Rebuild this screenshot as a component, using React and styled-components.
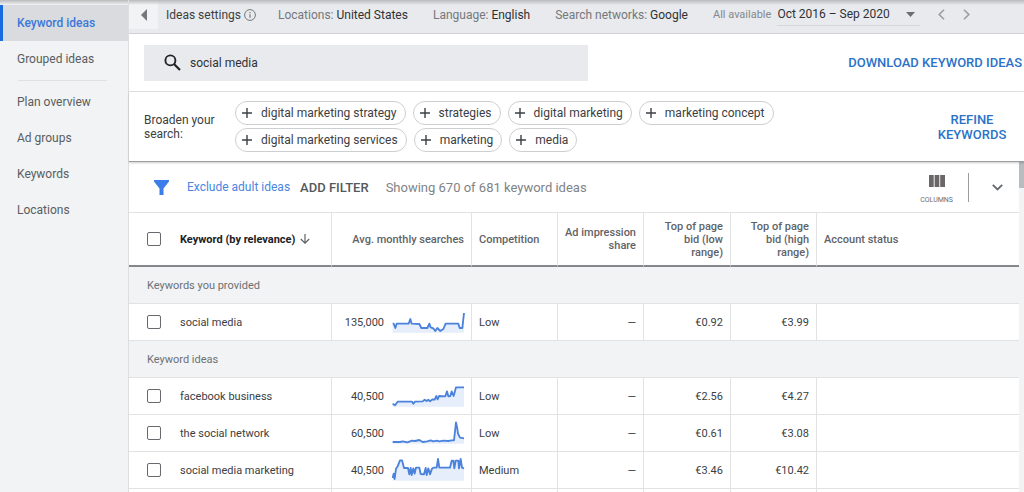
import React, { useState } from 'react'
import styled, { createGlobalStyle } from 'styled-components'

const navItems = ['Keyword ideas', 'Grouped ideas', 'Plan overview', 'Ad groups', 'Keywords', 'Locations']

const broaden = [
  'digital marketing strategy',
  'strategies',
  'digital marketing',
  'marketing concept',
  'digital marketing services',
  'marketing',
  'media'
]

const provided = [
  {
    keyword: 'social media',
    searches: '135,000',
    competition: 'Low',
    low: '€0.92',
    high: '€3.99',
    trend: '2,38 5,38 10,51 14,38 50,38 55,24 59,38 82,39 88,51 106,51 112,38 116,49 124,52 130,60 136,51 145,60 154,54 161,38 199,38 203,51 211,51 216,6'
  }
]

const ideas = [
  {
    keyword: 'facebook business',
    searches: '40,500',
    competition: 'Low',
    low: '€2.56',
    high: '€4.27',
    trend: '2,56 9,61 17,50 60,50 64,56 69,50 92,49 98,44 104,48 109,44 114,49 122,43 128,44 133,33 137,43 141,33 160,34 165,19 169,34 175,33 179,19 185,33 192,7 216,7'
  },
  {
    keyword: 'the social network',
    searches: '60,500',
    competition: 'Low',
    low: '€0.61',
    high: '€3.08',
    trend: '2,60 24,60 32,58 46,61 60,56 69,57 82,54 92,60 106,58 116,55 124,58 134,56 142,58 154,56 169,57 179,55 186,55 192,1 196,20 198,35 204,47 216,49'
  },
  {
    keyword: 'social media marketing',
    searches: '40,500',
    competition: 'Medium',
    low: '€3.46',
    high: '€10.42',
    trend: '2,57 5,44 8,60 12,29 17,22 24,4 30,4 36,27 48,27 52,46 56,27 59,48 64,28 68,44 72,26 82,26 86,45 96,46 101,27 104,48 109,28 114,46 120,29 124,26 134,26 138,0 142,26 174,26 179,5 184,5 187,28 191,5 199,5 201,28 206,0 210,26 216,28'
  }
]

const Sparkline = ({ points }) => (
  <Spark viewBox='-3 0 219 66' aria-hidden='true'>
    <polygon points={`2,65 ${points} 216,65`} fill='#e6eefb' />
    <polyline points={points} fill='none' stroke='#4a82dc' strokeWidth='5.5' strokeLinejoin='round' />
  </Spark>
)

const KeywordRow = ({ row }) => (
  <tr>
    <Cell>
      <KeywordLabel>
        <Checkbox type='checkbox' />
        {row.keyword}
      </KeywordLabel>
    </Cell>
    <Cell>
      <Searches>
        {row.searches}
        <Sparkline points={row.trend} />
      </Searches>
    </Cell>
    <Cell>{row.competition}</Cell>
    <Cell $right>—</Cell>
    <Cell $right>{row.low}</Cell>
    <Cell $right>{row.high}</Cell>
    <Cell />
  </tr>
)

const App = () => {
  const [query, setQuery] = useState('social media')
  const [active, setActive] = useState('Keyword ideas')

  return (
    <Page>
      <GlobalStyle />
      <Sidebar>
        {navItems.map(item => (
          <React.Fragment key={item}>
            <NavLink href='#' $active={item === active} onClick={() => setActive(item)}>
              {item}
            </NavLink>
            {item === 'Grouped ideas' && <NavDivider />}
          </React.Fragment>
        ))}
      </Sidebar>

      <Main>
        <SettingsBar>
          <CollapseButton aria-label='Collapse'>
            <svg width='6' height='12' viewBox='0 0 6 12'>
              <path d='M6 0v12L0 6z' fill='#75787c' />
            </svg>
          </CollapseButton>
          <SettingsTitle>
            Ideas settings
            <svg width='12' height='12' viewBox='0 0 12 12' fill='none' stroke='#75787c'>
              <circle cx='6' cy='6' r='5.4' />
              <path d='M6 5.2v3.6M6 3v1.2' strokeWidth='1.2' />
            </svg>
          </SettingsTitle>
          <Settings>
            <Setting>Locations: <b>United States</b></Setting>
            <Setting>Language: <b>English</b></Setting>
            <Setting>Search networks: <b>Google</b></Setting>
            <DateRange>
              <label htmlFor='range'>All available</label>
              <SelectWrap>
                <DateSelect id='range'>
                  <option>Oct 2016 – Sep 2020</option>
                </DateSelect>
                <svg width='9' height='5' viewBox='0 0 9 5'>
                  <path d='M0 0h9L4.500 5z' fill='#6a6d71' />
                </svg>
              </SelectWrap>
            </DateRange>
          </Settings>
          <Pager>
            <IconButton aria-label='Previous period'>
              <svg width='7' height='11' viewBox='0 0 7 11' fill='none' stroke='#9a9da1' strokeWidth='1.6'>
                <path d='M6 .7L1.200 5.500 6 10.300' />
              </svg>
            </IconButton>
            <IconButton aria-label='Next period'>
              <svg width='7' height='11' viewBox='0 0 7 11' fill='none' stroke='#9a9da1' strokeWidth='1.6'>
                <path d='M1 .7l4.800 4.800L1 10.300' />
              </svg>
            </IconButton>
          </Pager>
        </SettingsBar>

        <SearchSection>
          <SearchBox>
            <svg width='17' height='17' viewBox='0 0 17 17' fill='none' stroke='#222326' strokeWidth='1.9'>
              <circle cx='6.4' cy='6.4' r='5' />
              <path d='M10 10l6 6' strokeWidth='2.200' />
            </svg>
            <SearchInput aria-label='Search keywords' value={query} onChange={e => setQuery(e.target.value)} />
          </SearchBox>
          <TextButton>DOWNLOAD KEYWORD IDEAS</TextButton>
        </SearchSection>

        <BroadenSection>
          <BroadenLabel>Broaden your search:</BroadenLabel>
          <Chips>
            {broaden.map(term => (
              <Chip key={term}>
                <svg width='10' height='10' viewBox='0 0 10 10' stroke='#3c4043' strokeWidth='1.4'>
                  <path d='M5 0v10M0 5h10' />
                </svg>
                {term}
              </Chip>
            ))}
          </Chips>
          <RefineButton>REFINE KEYWORDS</RefineButton>
        </BroadenSection>

        <Results>
          <ResultsBody>
            <FilterBar>
              <svg width='15' height='15' viewBox='0 0 15 15'>
                <path d='M0 0h15v1.500L9.500 8.500V15h-4V8.500L0 1.500z' fill='#3b7de9' />
              </svg>
              <FilterLink href='#'>Exclude adult ideas</FilterLink>
              <AddFilter>ADD FILTER</AddFilter>
              <Count>Showing 670 of 681 keyword ideas</Count>
              <ColumnsButton>
                <svg width='16' height='12' viewBox='0 0 16 12' fill='#6b6769'>
                  <path d='M0 0h4.700v12H0zM5.600 0h4.700v12H5.600zM11.200 0H16v12h-4.800z' />
                </svg>
                COLUMNS
              </ColumnsButton>
              <ExpandButton aria-label='Expand'>
                <svg width='11' height='7' viewBox='0 0 11 7' fill='none' stroke='#66696d' strokeWidth='1.8'>
                  <path d='M.8.8l4.700 4.700L10.200.8' />
                </svg>
              </ExpandButton>
            </FilterBar>
            <Table>
              <colgroup>
                <Col $width={203} />
                <Col $width={140} />
                <Col $width={86} />
                <Col $width={86} />
                <Col $width={87} />
                <Col $width={86} />
                <col />
              </colgroup>
              <thead>
                <tr>
                  <HeadCell>
                    <KeywordLabel $strong>
                      <Checkbox type='checkbox' />
                      Keyword (by relevance)
                      <svg width='10' height='10' viewBox='0 0 10 10' fill='none' stroke='#5f6368' strokeWidth='1.2'>
                        <path d='M5 0v9M.8 5L5 9.200 9.200 5' />
                      </svg>
                    </KeywordLabel>
                  </HeadCell>
                  <HeadCell $right>Avg. monthly searches</HeadCell>
                  <HeadCell>Competition</HeadCell>
                  <HeadCell $right>Ad impression share</HeadCell>
                  <HeadCell $right>Top of page bid (low range)</HeadCell>
                  <HeadCell $right>Top of page bid (high range)</HeadCell>
                  <HeadCell>Account status</HeadCell>
                </tr>
              </thead>
              <tbody>
                <tr><GroupCell colSpan={7}>Keywords you provided</GroupCell></tr>
                {provided.map(row => <KeywordRow key={row.keyword} row={row} />)}
                <tr><GroupCell colSpan={7}>Keyword ideas</GroupCell></tr>
                {ideas.map(row => <KeywordRow key={row.keyword} row={row} />)}
                <tr>
                  <Cell /><Cell /><Cell /><Cell /><Cell /><Cell /><Cell />
                </tr>
              </tbody>
            </Table>
          </ResultsBody>
          <ScrollTrack><ScrollThumb /></ScrollTrack>
        </Results>
      </Main>
    </Page>
  )
}

export default App

const GlobalStyle = createGlobalStyle`
  * {
    box-sizing: border-box;
  }
  body {
    margin: 0;
    font-family: Roboto, sans-serif;
    font-size: 12px;
    color: #3c4043;
  }
  button, input, select {
    font: inherit;
    color: inherit;
    margin: 0;
    padding: 0;
    border: 0;
    background: none;
  }
  button {
    cursor: pointer;
  }
  a {
    text-decoration: none;
  }
  svg {
    display: block;
    flex: none;
  }
`

const Page = styled.div`
  display: flex;
  height: 100vh;
  overflow: hidden;
  background: #f1f3f4;
`

const Sidebar = styled.nav`
  flex: none;
  width: 129px;
  padding-top: 5px;
  border-right: 1px solid #dcdee0;
  background: linear-gradient(#b9babc, #f1f3f4 5px);
`

const NavLink = styled.a`
  display: flex;
  align-items: center;
  height: 36px;
  padding-left: ${props => props.$active ? 14 : 17}px;
  border-left: ${props => props.$active ? '3px solid #1a6be0' : 'none'};
  background: ${props => props.$active ? '#dadbde' : 'transparent'};
  color: ${props => props.$active ? '#3b78dc' : '#5a5d61'};
  font-weight: ${props => props.$active ? 500 : 400};
`

const NavDivider = styled.hr`
  margin: 3px 21px 3px 18px;
  border: 0;
  border-top: 1px solid #dfe1e3;
`

const Main = styled.main`
  flex: 1;
  min-width: 0;
  display: flex;
  flex-direction: column;
`

const SettingsBar = styled.div`
  flex: none;
  display: flex;
  align-items: center;
  height: 34px;
  padding-bottom: 4px;
  border-bottom: 1px solid #cfd1d3;
  background: linear-gradient(#b9babc, #e8eaed 5px);
  white-space: nowrap;
`

const CollapseButton = styled.button`
  align-self: stretch;
  display: flex;
  align-items: center;
  justify-content: center;
  width: 29px;
  background: linear-gradient(#b9babc, #f1f3f4 5px);
`

const SettingsTitle = styled.div`
  display: flex;
  align-items: center;
  gap: 3px;
  margin: 0 22px 0 8px;
`

const Settings = styled.div`
  display: flex;
  align-items: center;
  gap: 25px;
`

const Setting = styled.span`
  color: #75787c;
  b {
    font-weight: 400;
    color: #2f3235;
  }
`

const DateRange = styled.div`
  display: flex;
  align-items: center;
  gap: 6px;
  color: #85888c;
  label {
    font-size: 11px;
  }
`

const SelectWrap = styled.div`
  display: flex;
  align-items: center;
  width: 143px;
  height: 22px;
  padding-right: 5px;
  border-bottom: 1px solid #d5d7da;
`

const DateSelect = styled.select`
  flex: 1;
  appearance: none;
  color: #2f3235;
`

const Pager = styled.div`
  display: flex;
  gap: 18px;
  margin-left: 18px;
`

const IconButton = styled.button`
  display: flex;
`

const SearchSection = styled.div`
  flex: none;
  display: flex;
  align-items: center;
  justify-content: space-between;
  height: 58px;
  padding: 0 2px 0 15px;
  border-bottom: 1px solid #dfe1e3;
  background: #fff;
`

const SearchBox = styled.div`
  display: flex;
  align-items: center;
  gap: 9px;
  width: 444px;
  height: 36px;
  padding: 0 20px;
  background: #e8eaed;
`

const SearchInput = styled.input`
  flex: 1;
  outline: none;
  color: #2f3235;
`

const TextButton = styled.button`
  color: #2b72c8;
  font-size: 13px;
  font-weight: 500;
  line-height: 15px;
`

const BroadenSection = styled.div`
  flex: none;
  position: relative;
  z-index: 1;
  display: flex;
  align-items: center;
  height: 70px;
  padding-left: 15px;
  border-bottom: 1px solid #9b9d9f;
  box-shadow: 0 1px 2px rgba(0, 0, 0, 0.2);
  background: #fff;
`

const BroadenLabel = styled.div`
  flex: none;
  width: 91px;
  padding-right: 16px;
  line-height: 14px;
`

const Chips = styled.div`
  flex: 1;
  display: flex;
  flex-wrap: wrap;
  gap: 3px 7px;
`

const Chip = styled.button`
  display: flex;
  align-items: center;
  gap: 9px;
  height: 24px;
  padding: 0 8px 0 6px;
  border: 1px solid #cccfd2;
  border-radius: 12px;
`

const RefineButton = styled(TextButton)`
  flex: none;
  width: 104px;
  padding: 0 16px;
`

const Results = styled.div`
  flex: 1;
  min-height: 0;
  display: flex;
`

const ResultsBody = styled.div`
  flex: 1;
  min-width: 0;
  overflow: hidden;
`

const FilterBar = styled.div`
  display: flex;
  align-items: center;
  height: 50px;
  padding-left: 25px;
  background: #fff;
`

const FilterLink = styled.a`
  margin: 0 10px 0 18px;
  color: #4a86e0;
`

const AddFilter = styled.button`
  color: #55585c;
  font-size: 13px;
  font-weight: 500;
`

const Count = styled.span`
  flex: 1;
  margin-left: 17px;
  color: #808387;
  font-size: 13px;
`

const ColumnsButton = styled.button`
  display: flex;
  flex-direction: column;
  align-items: center;
  gap: 9px;
  padding: 4px 15px 0 0;
  color: #6b6e72;
  font-size: 7px;
`

const ExpandButton = styled.button`
  display: flex;
  align-items: center;
  height: 29px;
  padding: 0 16px 0 23px;
  border-left: 1px solid #9a9da0;
`

const Table = styled.table`
  width: 100%;
  table-layout: fixed;
  border-collapse: separate;
  border-spacing: 0;
  background: #fff;
`

const Col = styled.col`
  width: ${props => props.$width}px;
`

const HeadCell = styled.th`
  height: 55px;
  padding: 0 7px;
  border-top: 1px solid #e0e2e4;
  border-bottom: 2px solid #85888b;
  border-right: 1px solid #e0e2e4;
  color: #5f6368;
  font-size: 11px;
  font-weight: 500;
  line-height: 13px;
  text-align: ${props => props.$right ? 'right' : 'left'};
  &:last-child {
    border-right: 0;
  }
`

const Cell = styled.td`
  height: 37px;
  padding: 0 7px;
  border-bottom: 1px solid #e0e2e4;
  border-right: 1px solid #e0e2e4;
  font-size: 11px;
  text-align: ${props => props.$right ? 'right' : 'left'};
  &:last-child {
    border-right: 0;
  }
`

const GroupCell = styled.td`
  height: 37px;
  padding: 0 18px;
  border-bottom: 1px solid #e0e2e4;
  background: #f1f3f4;
  color: #6d7075;
  font-size: 11px;
`

const KeywordLabel = styled.label`
  display: flex;
  align-items: center;
  padding-left: 11px;
  color: ${props => props.$strong ? '#202124' : 'inherit'};
  font-weight: ${props => props.$strong ? 700 : 'inherit'};
  svg {
    margin-left: 5px;
  }
`

const Checkbox = styled.input`
  appearance: none;
  flex: none;
  width: 14px;
  height: 14px;
  margin-right: 19px;
  border: 1px solid #66696d;
  border-radius: 2px;
  background: #fff;
  &:checked {
    background: #1a73e8;
  }
`

const Searches = styled.div`
  display: flex;
  align-items: center;
  justify-content: flex-end;
  gap: 7px;
`

const Spark = styled.svg`
  width: 73px;
  height: 22px;
  overflow: visible;
`

const ScrollTrack = styled.div`
  flex: none;
  width: 5px;
  background: #f1f3f4;
`

const ScrollThumb = styled.div`
  height: 26px;
  background: #b9bcbe;
`
